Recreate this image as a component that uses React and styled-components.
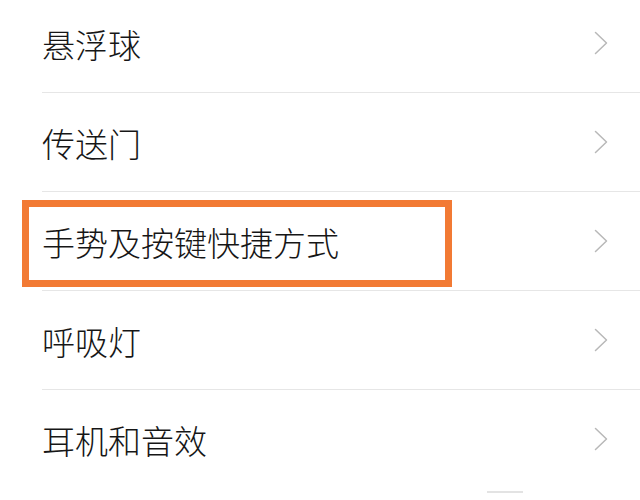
import styled, { createGlobalStyle } from "styled-components";

const GlobalStyle = createGlobalStyle`
  html, body {
    margin: 0;
    padding: 0;
    background: #ffffff;
  }
  body {
    font-family: "Noto Sans CJK SC", "Noto Sans", sans-serif;
    overflow: hidden;
  }
`;

const items = [
  { label: "悬浮球" },
  { label: "传送门" },
  { label: "手势及按键快捷方式", marked: true },
  { label: "呼吸灯" },
  { label: "耳机和音效" },
];

const Chevron = () => (
  <svg width="14" height="24" viewBox="0 0 14 24" fill="none">
    <polyline
      points="1.5,1.5 12.5,12 1.5,22.5"
      stroke="#b8b8b8"
      strokeWidth="1.5"
      strokeLinecap="round"
      strokeLinejoin="round"
    />
  </svg>
);

const App = () => {
  return (
    <>
      <GlobalStyle />
      <Screen>
        <List>
          {items.map((item) => (
            <Row key={item.label}>
              <Label>{item.label}</Label>
              <Arrow>
                <Chevron />
              </Arrow>
              {item.marked && <Highlight />}
            </Row>
          ))}
        </List>
        <Tail />
      </Screen>
    </>
  );
};

const Screen = styled.div`
  width: 640px;
  height: 500px;
  overflow: hidden;
  background: #ffffff;
`;

const List = styled.div`
  display: flex;
  flex-direction: column;
  margin-top: -6px;
  padding-left: 42px;
`;

const Row = styled.div`
  position: relative;
  height: 98px;
  display: flex;
  align-items: center;
  justify-content: space-between;
  border-bottom: 1.5px solid #e6e6e6;
  &:last-child {
    border-bottom-color: transparent;
  }
`;

const Label = styled.span`
  font-size: 33px;
  font-weight: 300;
  line-height: 1;
  color: #161616;
  margin-top: 2px;
`;

const Arrow = styled.div`
  display: flex;
  align-items: center;
  margin-right: 32px;
`;

const Highlight = styled.div`
  position: absolute;
  left: -20px;
  top: 8px;
  width: 430px;
  height: 87px;
  box-sizing: border-box;
  border: 7.5px solid #f27a34;
  pointer-events: none;
`;

const Tail = styled.div`
  width: 36px;
  height: 1.5px;
  margin: 2px 0 0 487px;
  background: #e3e3e3;
`;

export default App;
